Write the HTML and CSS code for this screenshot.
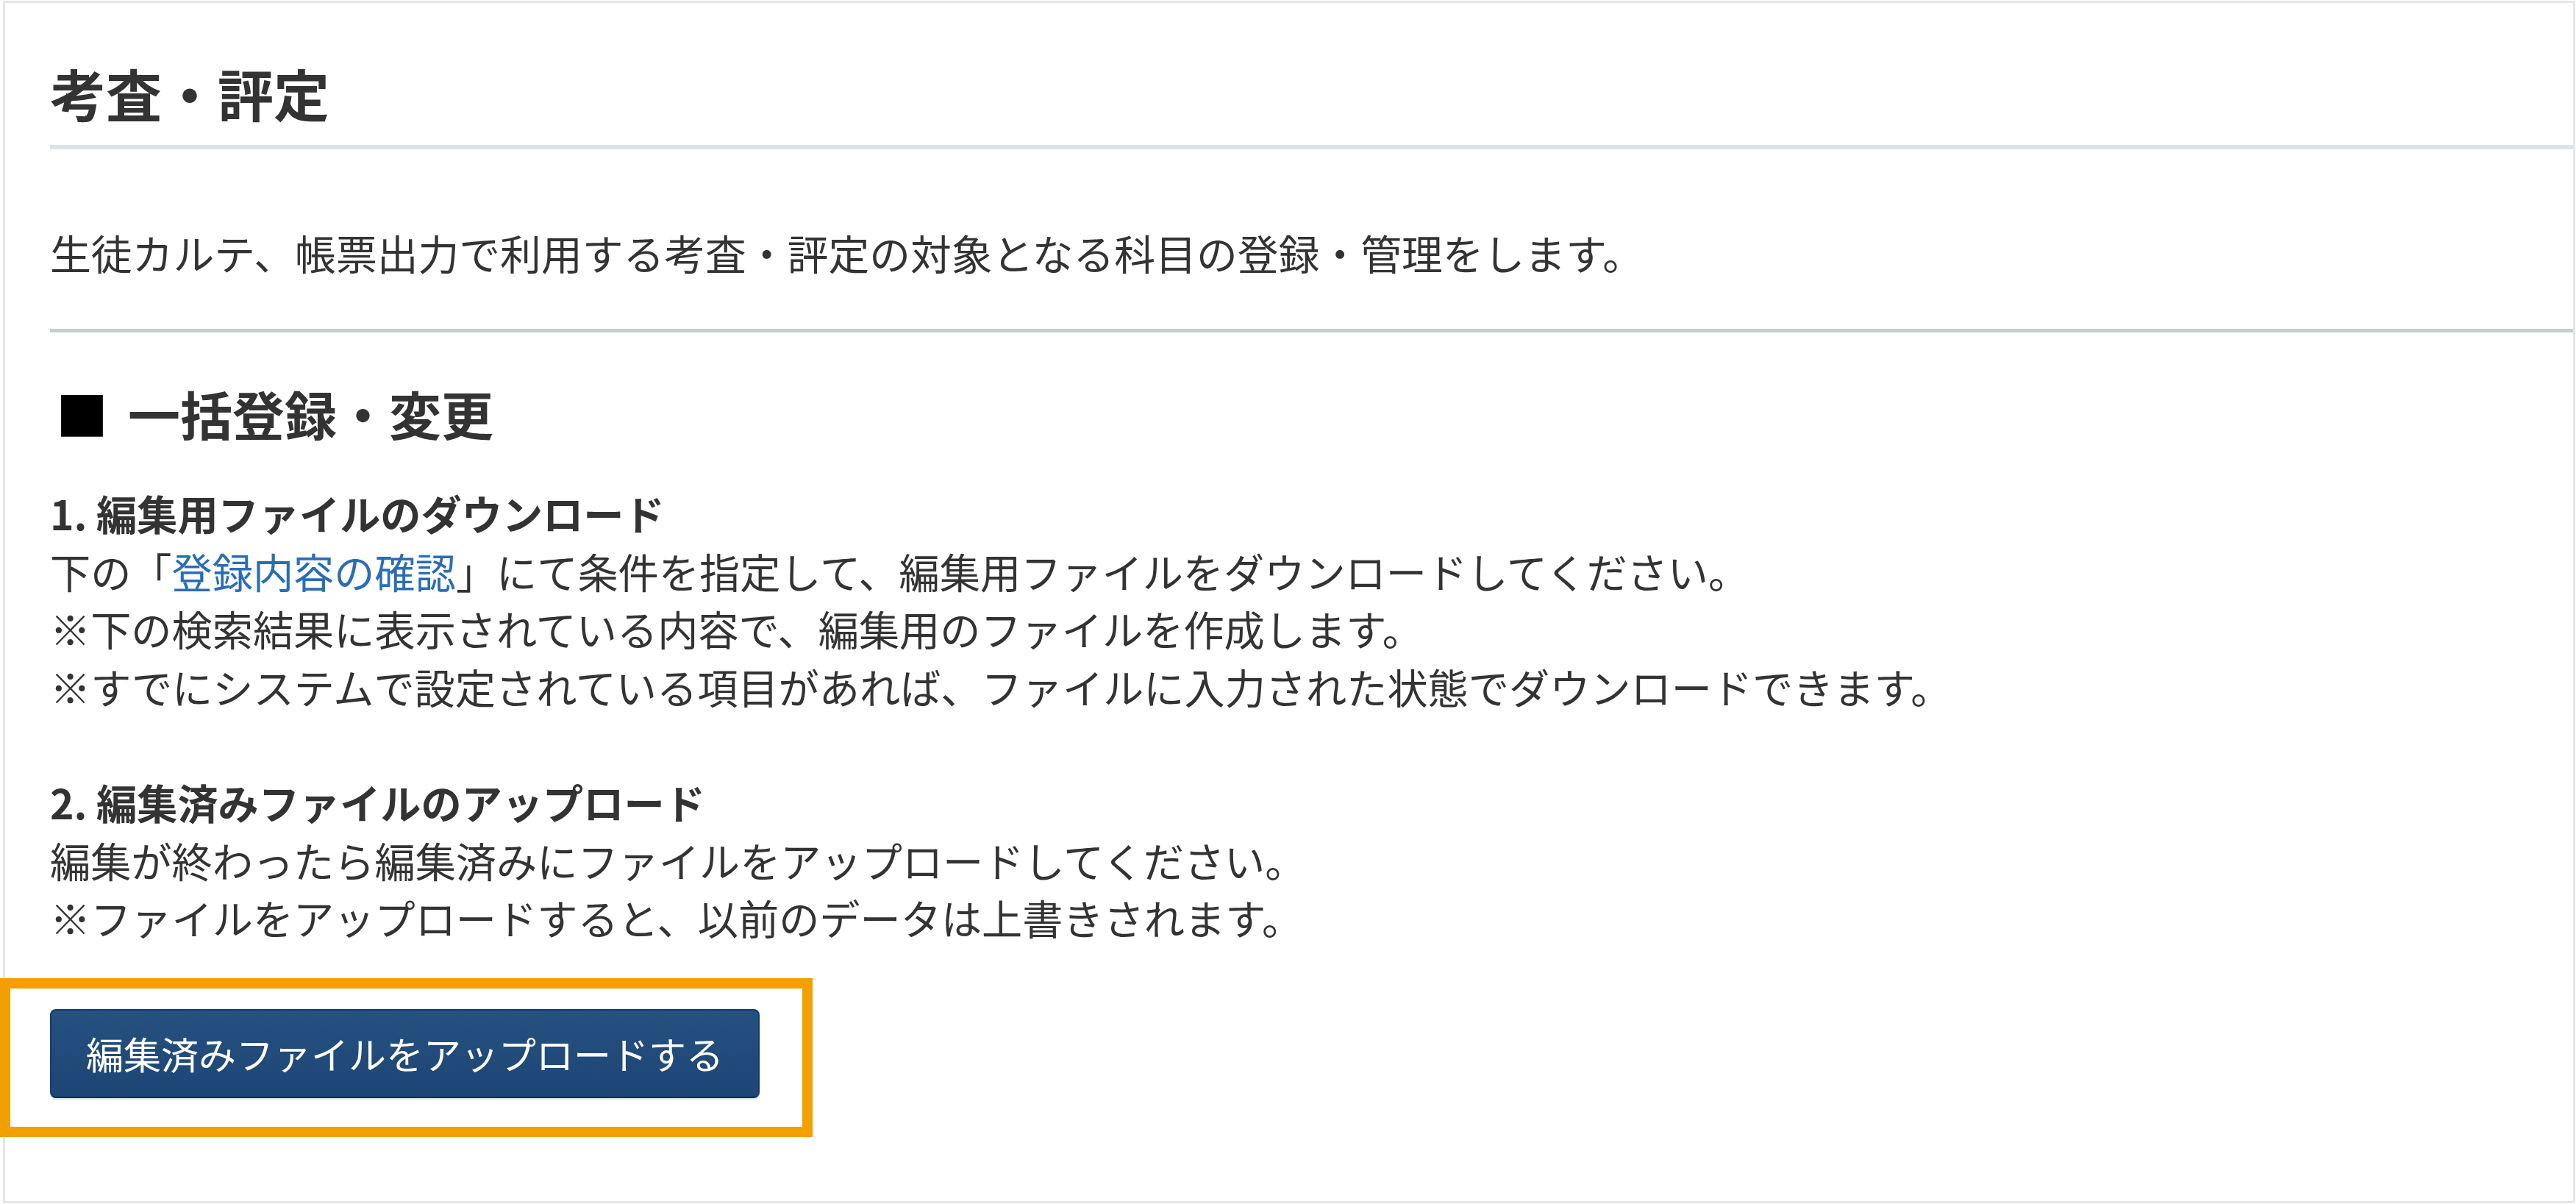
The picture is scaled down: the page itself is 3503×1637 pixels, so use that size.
FILE: index.html
```html
<!DOCTYPE html>
<html lang="ja">
<head>
  <meta charset="UTF-8" />
  <meta name="viewport" content="width=device-width, initial-scale=1.0" />
  <title>考査・評定</title>
  <link rel="stylesheet" href="styles.css">
</head>
<body>

  <div class="panel">
    <h1 class="page-title">考査・評定</h1>

    <p class="lead">生徒カルテ、帳票出力で利用する考査・評定の対象となる科目の登録・管理をします。</p>

    <hr class="rule">

    <h2 class="section-title"><span class="mark">■</span>一括登録・変更</h2>

    <div class="steps">
      <div class="step">
        <h3>1. 編集用ファイルのダウンロード</h3>
        <p>下の「<a href="#confirm">登録内容の確認</a>」にて条件を指定して、編集用ファイルをダウンロードしてください。</p>
        <p>※下の検索結果に表示されている内容で、編集用のファイルを作成します。</p>
        <p>※すでにシステムで設定されている項目があれば、ファイルに入力された状態でダウンロードできます。</p>
      </div>

      <div class="step">
        <h3>2. 編集済みファイルのアップロード</h3>
        <p>編集が終わったら編集済みにファイルをアップロードしてください。</p>
        <p>※ファイルをアップロードすると、以前のデータは上書きされます。</p>
      </div>
    </div>

    <!-- 注目枠 -->
    <div class="highlight">
      <button class="upload-btn" type="button">編集済みファイルをアップロードする</button>
    </div>
  </div>

</body>
</html>
```

FILE: styles.css
```css
body {
  font-family: "Noto Sans CJK JP", "Noto Sans", sans-serif;
  background-color: #fff;
  color: #333;
  margin: 0;
  padding: 0;
}

.panel {
  margin: 1px 1px 0 4px;
  height: 1635px;
  box-sizing: border-box;
  border: 3px solid #e6e6e6;
  padding: 72px 0 0 61px;
}

.page-title {
  margin: 0;
  font-size: 76px;
  line-height: 100px;
  font-weight: bold;
  padding-bottom: 21px;
  border-bottom: 6px solid #dde2e7;
}

.lead {
  margin: 101px 0 0;
  font-size: 55.8px;
  line-height: 78px;
}

.rule {
  margin: 65px 0 0;
  height: 0;
  border: 0;
  border-top: 5px solid #c6cdd5;
}

.section-title {
  margin: 59px 0 0;
  font-size: 71px;
  line-height: 100px;
  font-weight: bold;
}

.section-title .mark {
  color: #000;
  margin: 0 27px 0 8px;
}

.steps {
  margin-top: 47px;
  font-size: 55.2px;
  line-height: 78.6px;
}

.step + .step {
  margin-top: 78.6px;
}

.step h3 {
  margin: 0;
  font-size: 55.2px;
  font-weight: bold;
}

.step p {
  margin: 0;
}

.step a {
  color: #2a6db5;
  text-decoration: none;
}

.highlight {
  display: flex;
  width: 1105px;
  box-sizing: border-box;
  margin: 43px 0 0 -68px;
  border: 14px solid #f29f00;
  padding: 28px 0 39px 54px;
}

.upload-btn {
  height: 121px;
  padding: 0 47px;
  font-family: inherit;
  font-size: 51px;
  line-height: 1;
  color: #fff;
  background: linear-gradient(#25517f, #1e4575);
  border: 2px solid #173c6a;
  border-bottom-color: #0f2d57;
  border-radius: 8px;
  box-shadow: 0 2px 3px rgba(0,0,0,0.15);
  cursor: pointer;
}

.upload-btn:hover {
  background: #1b3f6b;
}
```
